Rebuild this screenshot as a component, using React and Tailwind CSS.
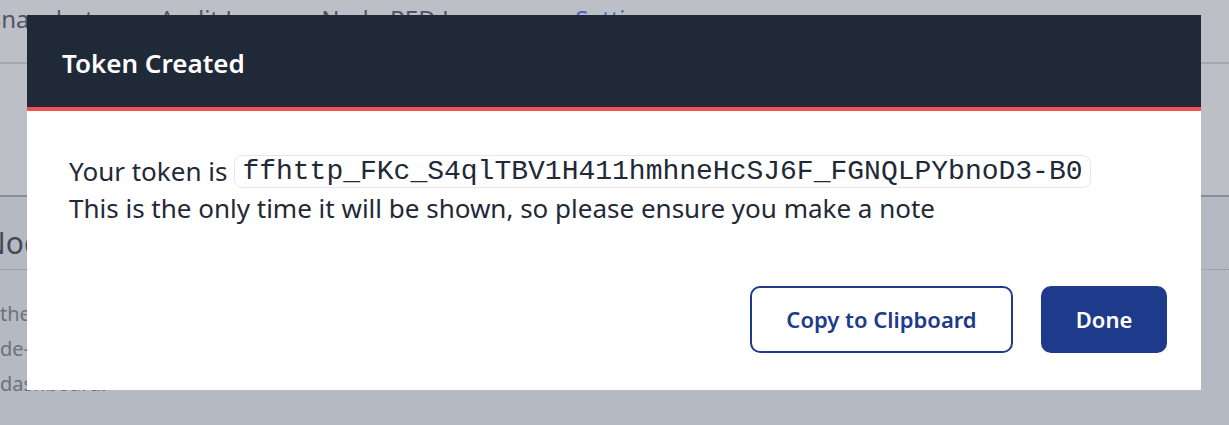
import React from 'react';

const App = () => {
  const token = 'ffhttp_FKc_S4qlTBV1H411hmhneHcSJ6F_FGNQLPYbnoD3-B0';

  return (
    <div className="relative h-[425px] w-[1229px] overflow-hidden bg-[#f3f4f6] font-['Noto_Sans',sans-serif] text-[#1f2937]">
      {/* page behind the dialog */}
      <div className="-ml-[12px]">
        <nav className="flex h-[64px] gap-[54px] border-b-2 border-[#cfd3d9] bg-white pt-[1px] text-[24px] text-[#374151]">
          <span>Snapshots</span>
          <span>Audit Log</span>
          <span>Node-RED Logs</span>
          <span className="ml-[26px] text-[#2563eb]">Settings</span>
        </nav>
        <div className="h-[133px] border-b-2 border-[#9ca3af] bg-white" />
        <div className="pt-[26px]">
          <h2 className="border-b border-dotted border-[#9ca3af] pb-[6px] pl-0 text-[30px] leading-[40px]">
            <span className="-ml-[5px]">Node-RED Editor</span>
          </h2>
          <p className="ml-[12px] mt-[26px] text-[20px] leading-[35px] text-[#6b7280]">
            the Node-RED editor will be hidden and only the<br />
            de-coupled dashboard can be accessed from the<br />
            dashboard.
          </p>
        </div>
      </div>

      {/* overlay */}
      <div className="absolute inset-0 bg-[#6b7280]/45" />

      {/* dialog */}
      <div className="absolute left-[27px] top-[15px] flex h-[375px] w-[1174px] flex-col bg-white">
        <div className="flex h-[96px] items-center border-b-4 border-[#f05252] bg-[#1f2937] px-[35px] pt-[4px]">
          <h1 className="text-[26px] font-semibold text-white">Token Created</h1>
        </div>
        <div className="flex flex-1 flex-col pl-[42px] pr-[34px] pt-[42px]">
          <div className="text-[26px] leading-[37px] text-[#1f2937]">
            <div className="flex items-center">
              <span>Your token is</span>
              <code className="ml-[7px] rounded-[8px] border border-[#e5e7eb] px-[7px] font-['Liberation_Mono',monospace] text-[28px] leading-[31px]">
                {token}
              </code>
            </div>
            <p>This is the only time it will be shown, so please ensure you make a note</p>
          </div>
          <div className="mt-auto mb-[37px] flex justify-end gap-[28px]">
            <button className="h-[67px] w-[263px] rounded-[10px] border-2 border-[#1e3a8a] bg-white text-[22px] font-semibold text-[#1e3a8a]">
              Copy to Clipboard
            </button>
            <button className="h-[67px] w-[126px] rounded-[10px] bg-[#1e3a8a] text-[22px] font-semibold text-white">
              Done
            </button>
          </div>
        </div>
      </div>
    </div>
  );
};

export default App;
